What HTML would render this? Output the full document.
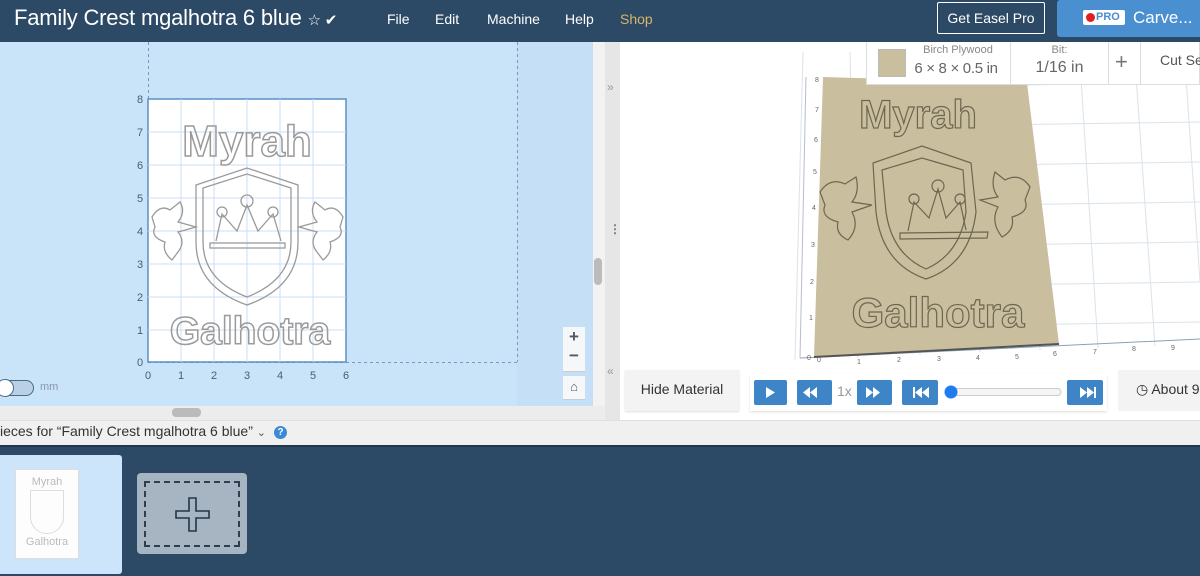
<!DOCTYPE html>
<html><head><meta charset="utf-8"><style>
*{margin:0;padding:0;box-sizing:border-box}
body{width:1200px;height:576px;overflow:hidden;font-family:"Liberation Sans",sans-serif;background:#fff;position:relative}
.a{position:absolute;white-space:nowrap}
.hdr{left:0;top:0;width:1200px;height:42px;background:#2c4a66}
.menu{color:#fff;font-size:14px;top:11px}
.btn{background:#3d85c6;border-radius:2px}
</style></head><body>
<div class="a hdr"></div>
<div class="a" style="left:14px;top:5px;color:#fff;font-size:22px;letter-spacing:-0.2px">Family Crest mgalhotra 6 blue <span style="font-size:15px">☆ ✔</span></div>
<div class="a menu" style="left:387px">File</div>
<div class="a menu" style="left:435px">Edit</div>
<div class="a menu" style="left:487px">Machine</div>
<div class="a menu" style="left:565px">Help</div>
<div class="a menu" style="left:620px;color:#d8b46a">Shop</div>
<div class="a" style="left:937px;top:2px;width:108px;height:32px;border:1px solid #fff;border-radius:2px;color:#fff;font-size:14px;text-align:center;line-height:30px">Get Easel Pro</div>
<div class="a" style="left:1057px;top:0;width:143px;height:37px;background:#4a8fd0;border-radius:3px 0 0 3px"></div>
<div class="a" style="left:1083px;top:10px;width:42px;height:15px;background:#fff;border-radius:2px;font-size:11px;color:#4a8fd0;font-weight:bold;line-height:15px;padding-left:13px">PRO</div>
<div class="a" style="left:1086px;top:13px;width:9px;height:9px;border-radius:50%;background:#e02020"></div>
<div class="a" style="left:1133px;top:8px;color:#fff;font-size:17px">Carve...</div>

<!-- left canvas -->
<div class="a" style="left:0;top:42px;width:595px;height:364px;background:#c9e3f9"></div>
<div class="a" style="left:517px;top:42px;width:78px;height:364px;background:#c5dff6"></div>
<svg class="a" style="left:0;top:42px" width="605" height="364">
<g fill="none" stroke="#6f9cc8" stroke-dasharray="3,3"><line x1="148.5" y1="0" x2="148.5" y2="320"/><line x1="517.5" y1="0" x2="517.5" y2="320"/><line x1="148" y1="320.5" x2="517" y2="320.5"/></g>
<rect x="148" y="57" width="198" height="263" fill="#fff" stroke="#5b8fc4" stroke-width="1.5"/>
<g stroke="#c9dff3" stroke-width="1">
<line x1="181" y1="57" x2="181" y2="320"/><line x1="214" y1="57" x2="214" y2="320"/><line x1="247" y1="57" x2="247" y2="320"/><line x1="280" y1="57" x2="280" y2="320"/><line x1="313" y1="57" x2="313" y2="320"/>
<line x1="148" y1="90" x2="346" y2="90"/><line x1="148" y1="123" x2="346" y2="123"/><line x1="148" y1="156" x2="346" y2="156"/><line x1="148" y1="189" x2="346" y2="189"/><line x1="148" y1="222" x2="346" y2="222"/><line x1="148" y1="255" x2="346" y2="255"/><line x1="148" y1="288" x2="346" y2="288"/></g>
<g fill="#4a5d70" font-size="11" text-anchor="middle">
<text x="140" y="61">8</text><text x="140" y="94">7</text><text x="140" y="127">6</text><text x="140" y="160">5</text><text x="140" y="193">4</text><text x="140" y="226">3</text><text x="140" y="259">2</text><text x="140" y="292">1</text><text x="140" y="324">0</text>
<text x="148" y="337">0</text><text x="181" y="337">1</text><text x="214" y="337">2</text><text x="247" y="337">3</text><text x="280" y="337">4</text><text x="313" y="337">5</text><text x="346" y="337">6</text></g>
<g fill="none" stroke="#9a9a9a" stroke-width="1.3">
<text x="247" y="114" text-anchor="middle" font-size="44" font-weight="bold" stroke-width="1.5">Myrah</text>
<text x="250" y="302" text-anchor="middle" font-size="39" font-weight="bold" stroke-width="1.5">Galhotra</text>
<path d="M196,143 L247,126 L298,143 L298,200 Q298,245 247,263 Q196,245 196,200 Z"/>
<path d="M203,146 L247,132 L291,146 L291,200 Q291,238 247,255 Q203,238 203,200 Z"/>
<rect x="210" y="201" width="75" height="5"/>
<path d="M216,199 L222,172 L237,189 L247,163 L258,189 L273,172 L281,199"/>
<circle cx="222" cy="170" r="5"/><circle cx="247" cy="159" r="6"/><circle cx="273" cy="170" r="5"/>
<path d="M152,175 Q160,162 170,168 L180,160 Q186,170 178,180 L196,185 L178,190 Q186,200 178,210 L172,218 Q162,210 165,200 Q150,195 155,185 Z"/>
<path d="M343,175 Q335,162 325,168 L315,160 Q309,170 317,180 L299,185 L317,190 Q309,200 317,210 L323,218 Q333,210 330,200 Q345,195 340,185 Z"/></g>
</svg>
<div class="a" style="left:-4px;top:380px;width:38px;height:16px;border:1px solid #4a6a8a;border-radius:8px;background:#b9d0e6"></div>
<div class="a" style="left:-4px;top:379px;width:18px;height:18px;border-radius:50%;background:#fff;border:1px solid #4a6a8a"></div>
<div class="a" style="left:40px;top:381px;font-size:11px;color:#8a98a8">mm</div>
<div class="a" style="left:563px;top:327px;width:22px;height:45px;background:#f5f7f9;border-bottom:1px solid #ccc"></div>
<div class="a" style="left:563px;top:327px;width:22px;text-align:center;font-size:17px;font-weight:bold;color:#556">+</div>
<div class="a" style="left:563px;top:346px;width:22px;text-align:center;font-size:17px;font-weight:bold;color:#556">−</div>
<div class="a" style="left:563px;top:376px;width:22px;height:24px;background:#f5f7f9;border-bottom:1px solid #ccc;text-align:center;font-size:13px;color:#556;line-height:22px">⌂</div>
<div class="a" style="left:593px;top:42px;width:12px;height:364px;background:#f2f2f2"></div>
<div class="a" style="left:594px;top:258px;width:8px;height:27px;background:#bbb;border-radius:4px"></div>
<div class="a" style="left:0;top:406px;width:605px;height:14px;background:#ececec"></div>
<div class="a" style="left:172px;top:408px;width:29px;height:9px;background:#bbb;border-radius:4px"></div>
<div class="a" style="left:605px;top:42px;width:15px;height:378px;background:#e6e6e6"></div>
<div class="a" style="left:607px;top:80px;color:#999;font-size:12px">»</div>
<div class="a" style="left:609px;top:222px;color:#777;font-size:12px;font-weight:bold">⋮</div>
<div class="a" style="left:607px;top:364px;color:#999;font-size:12px">«</div>

<!-- 3d view -->
<svg class="a" style="left:620px;top:42px" width="580" height="378">
<rect width="580" height="378" fill="#fff"/>
<g stroke="#d9e3ec" stroke-width="1" fill="none">
<line x1="183" y1="10" x2="175" y2="318"/><line x1="230" y1="10" x2="238" y2="316"/><line x1="290" y1="10" x2="300" y2="313"/><line x1="350" y1="10" x2="360" y2="310"/>
<line x1="405" y1="10" x2="420" y2="308"/><line x1="460" y1="20" x2="478" y2="306"/><line x1="515" y1="20" x2="535" y2="304"/><line x1="565" y1="20" x2="580" y2="240"/>
<line x1="230" y1="46" x2="580" y2="40"/><line x1="230" y1="85" x2="580" y2="80"/><line x1="232" y1="125" x2="580" y2="120"/><line x1="233" y1="165" x2="580" y2="160"/><line x1="235" y1="205" x2="580" y2="200"/><line x1="237" y1="245" x2="580" y2="240"/><line x1="238" y1="285" x2="580" y2="280"/></g>
<line x1="180" y1="316" x2="580" y2="297" stroke="#8aa0b8" stroke-width="1"/>
<line x1="186" y1="35" x2="180" y2="316" stroke="#bbc" stroke-width="1"/>
<polygon points="203,35 407,41 439,302 194,315" fill="#c9be9e"/>
<line x1="194" y1="315" x2="439" y2="302" stroke="#555" stroke-width="2"/>
<g fill="none" stroke="#6e6650" stroke-width="1.2">
<text x="298" y="86" text-anchor="middle" font-size="40" font-weight="bold">Myrah</text>
<text x="318" y="285" text-anchor="middle" font-size="42" font-weight="bold">Galhotra</text>
<path d="M253,121 L302,104 L351,121 L356,170 Q350,222 306,237 Q262,222 256,170 Z"/>
<path d="M262,128 L302,116 L343,128 L346,170 Q340,212 306,227 Q272,212 266,170 Z"/>
<path d="M280,191 L368,190 L367,196 L280,197 Z"/>
<path d="M288,189 L294,160 L309,176 L318,147 L326,176 L340,160 L346,188"/>
<circle cx="294" cy="157" r="5"/><circle cx="318" cy="144" r="6"/><circle cx="340" cy="157" r="5"/>
<path d="M200,150 Q210,135 225,142 L236,135 Q240,150 232,160 L252,163 L232,170 Q240,185 228,198 Q215,192 218,180 Q200,175 205,163 Z"/>
<path d="M410,145 Q400,130 385,138 L375,130 Q370,145 378,155 L360,158 L378,165 Q370,180 382,195 Q395,188 392,175 Q410,170 405,158 Z"/></g>
<g fill="#666" font-size="7">
<text x="197" y="320">0</text><text x="187" y="318">0</text><text x="237" y="322">1</text><text x="277" y="320">2</text><text x="317" y="319">3</text><text x="356" y="318">4</text><text x="395" y="317">5</text><text x="433" y="314">6</text><text x="473" y="312">7</text><text x="512" y="309">8</text><text x="551" y="308">9</text>
<text x="189" y="278">1</text><text x="190" y="242">2</text><text x="191" y="205">3</text><text x="192" y="168">4</text><text x="193" y="132">5</text><text x="194" y="100">6</text><text x="195" y="70">7</text><text x="195" y="40">8</text></g>
</svg>
<div class="a" style="left:866px;top:42px;width:334px;height:43px;background:#fff;border:1px solid #ddd;border-top:none"></div>
<div class="a" style="left:878px;top:49px;width:28px;height:28px;background:#c9be9e;border:1px solid #bbb"></div>
<div class="a" style="left:910px;top:44px;width:96px;text-align:center;font-size:11px;color:#888">Birch Plywood</div>
<div class="a" style="left:906px;top:60px;width:100px;font-size:15px;color:#666;text-align:center;letter-spacing:-0.3px">6 × 8 × 0.5 in</div>
<div class="a" style="left:1010px;top:42px;width:1px;height:43px;background:#ddd"></div>
<div class="a" style="left:1011px;top:44px;width:97px;text-align:center;font-size:11px;color:#888">Bit:</div>
<div class="a" style="left:1011px;top:59px;width:97px;text-align:center;font-size:16px;color:#666">1/16 in</div>
<div class="a" style="left:1108px;top:42px;width:1px;height:43px;background:#ddd"></div>
<div class="a" style="left:1115px;top:49px;font-size:22px;color:#777">+</div>
<div class="a" style="left:1140px;top:42px;width:1px;height:43px;background:#ddd"></div>
<div class="a" style="left:1160px;top:52px;font-size:14px;color:#555">Cut Se</div>

<div class="a" style="left:625px;top:370px;width:114px;height:41px;background:#f3f3f3;box-shadow:0 1px 2px #ddd;font-size:14px;color:#333;text-align:center;line-height:38px">Hide Material</div>
<div class="a" style="left:750px;top:374px;width:357px;height:37px;background:#fff;box-shadow:0 1px 2px #ddd"></div>
<div class="a btn" style="left:754px;top:380px;width:33px;height:25px"></div>
<div class="a btn" style="left:797px;top:380px;width:35px;height:25px"></div>
<div class="a" style="left:837px;top:383px;font-size:14px;color:#999">1x</div>
<div class="a btn" style="left:857px;top:380px;width:35px;height:25px"></div>
<div class="a btn" style="left:902px;top:380px;width:36px;height:25px"></div>
<div class="a btn" style="left:1067px;top:380px;width:36px;height:25px"></div>
<svg class="a" style="left:750px;top:374px" width="360" height="37" fill="#fff">
<path d="M16,13 L16,24 L25,18.5 Z"/>
<path d="M60,13 L53,18.5 L60,24 Z M67,13 L60,18.5 L67,24 Z"/>
<path d="M116,13 L123,18.5 L116,24 Z M123,13 L130,18.5 L123,24 Z"/>
<path d="M163,13 h2 v11 h-2 Z M172,13 L165,18.5 L172,24 Z M179,13 L172,18.5 L179,24 Z"/>
<path d="M330,13 L337,18.5 L330,24 Z M337,13 L344,18.5 L337,24 Z M344,13 h2 v11 h-2 Z"/>
<rect x="200" y="14.5" width="111" height="7" rx="3.5" fill="#f4f4f4" stroke="#ccc"/>
<circle cx="201" cy="18" r="6.5" fill="#1f7cf0"/></svg>
<div class="a" style="left:1118px;top:370px;width:82px;height:41px;background:#f3f3f3;font-size:14px;color:#333;line-height:38px;padding-left:18px">◷ About 9</div>

<!-- bottom -->
<div class="a" style="left:0;top:420px;width:1200px;height:25px;background:#f0f0f0;border-top:1px solid #e0e0e0"></div>
<div class="a" style="left:0;top:423px;font-size:14px;color:#333">ieces for “Family Crest mgalhotra 6 blue” <span style="font-size:11px;color:#555">⌄</span></div>
<div class="a" style="left:274px;top:426px;width:13px;height:13px;border-radius:50%;background:#3a8ad6;color:#fff;font-size:10px;font-weight:bold;text-align:center;line-height:13px">?</div>
<div class="a" style="left:0;top:445px;width:1200px;height:131px;background:#2c4a65;border-top:2px solid #1f3850"></div>
<div class="a" style="left:-3px;top:455px;width:125px;height:119px;background:#cde5fb;border-radius:3px"></div>
<div class="a" style="left:15px;top:469px;width:64px;height:90px;background:#fdfdfd;border:1px solid #ddd;font-size:11px;color:#bbb;text-align:center;padding-top:6px;white-space:normal">Myrah<div style="height:44px;margin:2px 14px;border:1px solid #ddd;border-radius:0 0 20px 20px"></div>Galhotra</div>
<div class="a" style="left:137px;top:473px;width:110px;height:81px;background:#a7b5c3;border-radius:4px"></div>
<div class="a" style="left:144px;top:481px;width:96px;height:66px;border:2px dashed #2c3e50"></div>
<svg class="a" style="left:175px;top:497px" width="36" height="36"><path d="M14,1 h7 v13 h13 v7 h-13 v13 h-7 v-13 h-13 v-7 h13 Z" fill="#a7b5c3" stroke="#22364a" stroke-width="1.6"/></svg>
</body></html>
